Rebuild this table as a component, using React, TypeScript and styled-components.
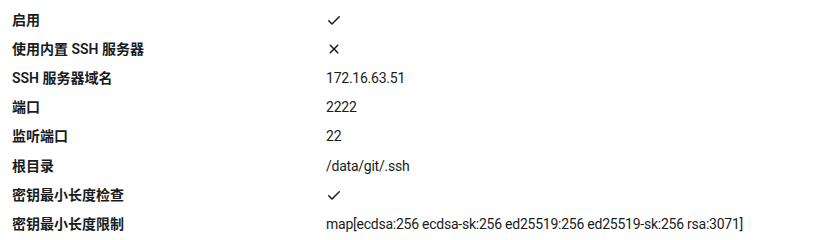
import React from "react"
import styled, { createGlobalStyle } from "styled-components"

const GlobalStyle = createGlobalStyle`
  html, body {
    margin: 0;
    padding: 0;
    background: #ffffff;
  }
  body {
    font-family: Roboto, "Noto Sans CJK SC", sans-serif;
    font-size: 14px;
    color: #181c21;
    -webkit-font-smoothing: antialiased;
  }
`

type Value = string | boolean

const rows: [string, Value][] = [
  ["启用", true],
  ["使用内置 SSH 服务器", false],
  ["SSH 服务器域名", "172.16.63.51"],
  ["端口", "2222"],
  ["监听端口", "22"],
  ["根目录", "/data/git/.ssh"],
  ["密钥最小长度检查", true],
  ["密钥最小长度限制", "map[ecdsa:256 ecdsa-sk:256 ed25519:256 ed25519-sk:256 rsa:3071]"],
]

const CheckIcon = () => (
  <S.Icon viewBox="0 0 16 16" width="16" height="16" aria-hidden="true">
    <path d="M13.78 4.22a.75.75 0 0 1 0 1.06l-7.25 7.25a.75.75 0 0 1-1.06 0L2.22 9.28a.751.751 0 0 1 .018-1.042.751.751 0 0 1 1.042-.018L6 10.94l6.72-6.72a.75.75 0 0 1 1.06 0Z" />
  </S.Icon>
)

const XIcon = () => (
  <S.Icon viewBox="0 0 16 16" width="16" height="16" aria-hidden="true">
    <path d="M3.72 3.72a.75.75 0 0 1 1.06 0L8 6.94l3.22-3.22a.749.749 0 0 1 1.275.326.749.749 0 0 1-.215.734L9.06 8l3.22 3.22a.749.749 0 0 1-.326 1.275.749.749 0 0 1-.734-.215L8 9.06l-3.22 3.22a.751.751 0 0 1-1.042-.018.751.751 0 0 1-.018-1.042L6.94 8 3.72 4.78a.75.75 0 0 1 0-1.06Z" />
  </S.Icon>
)

const App: React.FC = () => {
  return (
    <>
      <GlobalStyle />
      <S.List>
        {rows.map(([label, value]) => (
          <React.Fragment key={label}>
            <S.Term>{label}</S.Term>
            <S.Desc>
              {typeof value === "boolean" ? value ? <CheckIcon /> : <XIcon /> : value}
            </S.Desc>
          </React.Fragment>
        ))}
      </S.List>
    </>
  )
}

const S = {
  List: styled.dl`
    display: grid;
    grid-template-columns: 314px 1fr;
    margin: 0;
    padding: 5.4px 0 0 12px;
  `,
  Term: styled.dt`
    font-weight: 600;
    line-height: 20px;
    padding: 4.57px 0;
    white-space: nowrap;
  `,
  Desc: styled.dd`
    margin: 0;
    line-height: 20px;
    padding: 4.57px 0;
    letter-spacing: -0.24px;
    white-space: nowrap;
    display: flex;
    align-items: center;
  `,
  Icon: styled.svg`
    fill: currentColor;
    display: block;
  `,
}

export default App
